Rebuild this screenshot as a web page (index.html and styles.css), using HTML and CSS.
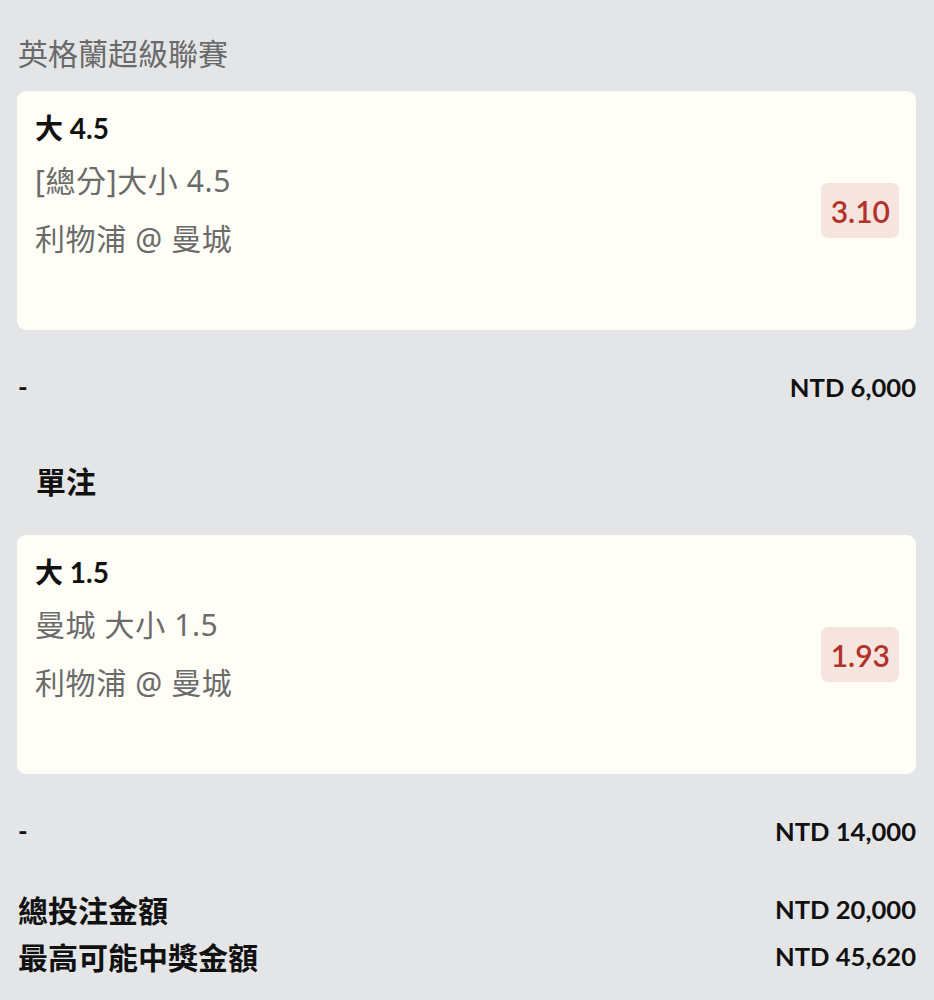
FILE: index.html
```html
<!DOCTYPE html>
<html lang="zh-Hant">
<head>
    <meta charset="UTF-8">
    <meta name="viewport" content="width=device-width, initial-scale=1.0">
    <title>投注單</title>
    <link rel="stylesheet" href="styles.css">
</head>
<body>

<h2 class="league">英格蘭超級聯賽</h2>

<div class="bet-card">
    <div class="bet-info">
        <div class="bet-title">大 4.5</div>
        <div class="bet-market">[總分]大小 4.5</div>
        <div class="bet-match">利物浦 @ 曼城</div>
    </div>
    <div class="odds">3.10</div>
</div>

<div class="stake-row">
    <span>-</span>
    <span class="amount">NTD 6,000</span>
</div>

<h3 class="section-title">單注</h3>

<div class="bet-card">
    <div class="bet-info">
        <div class="bet-title">大 1.5</div>
        <div class="bet-market">曼城 大小 1.5</div>
        <div class="bet-match">利物浦 @ 曼城</div>
    </div>
    <div class="odds">1.93</div>
</div>

<div class="stake-row last">
    <span>-</span>
    <span class="amount">NTD 14,000</span>
</div>

<div class="summary">
    <div class="summary-row">
        <span class="label">總投注金額</span>
        <span class="amount">NTD 20,000</span>
    </div>
    <div class="summary-row">
        <span class="label">最高可能中獎金額</span>
        <span class="amount">NTD 45,620</span>
    </div>
</div>

</body>
</html>
```

FILE: styles.css
```css
body {
    margin: 0;
    padding: 32px 18px 20px 17px;
    background-color: #e4e5e7;
    font-family: Lato, "Noto Sans CJK TC", sans-serif;
    color: #111;
}

.league {
    margin: 0 0 19px 1px;
    font-family: "Noto Sans CJK TC", sans-serif;
    font-size: 30px;
    font-weight: 400;
    line-height: 40px;
    color: #6a6a6a;
}

.bet-card {
    display: flex;
    align-items: center;
    padding: 17px 17px 0 18px;
    background-color: #fefef6;
    border-radius: 9px;
}
.bet-info {
    flex: 1;
    padding-bottom: 71px;
}
.bet-title {
    font-size: 28px;
    font-weight: 700;
    line-height: 40px;
}
.bet-market,
.bet-match {
    font-family: "Noto Sans", "Noto Sans CJK TC", sans-serif;
    font-size: 30px;
    line-height: 40px;
    letter-spacing: 0.6px;
    color: #6b6b6b;
}
.bet-market {
    margin-top: 13px;
}
.bet-match {
    margin-top: 18px;
}
.odds {
    margin-bottom: 18px;
    padding: 8px 9px 7px 10px;
    background-color: #f6e5df;
    border-radius: 7px;
    font-size: 30px;
    font-weight: 600;
    line-height: 40px;
    color: #b2322a;
}

.stake-row,
.summary-row {
    display: flex;
    justify-content: space-between;
    align-items: center;
    line-height: 40px;
    font-weight: 700;
}
.stake-row {
    margin: 37px 0 54px 1px;
    font-size: 26px;
}
.stake-row.last {
    margin-bottom: 38px;
}
.amount {
    font-size: 25.6px;
    font-weight: 700;
}

.section-title {
    margin: 0 0 34px 19px;
    font-size: 30px;
    line-height: 40px;
    font-weight: 700;
}

.summary {
    display: flex;
    flex-direction: column;
    gap: 7px;
    margin-left: 1px;
}
.summary-row .label {
    font-family: "Noto Sans CJK TC", sans-serif;
    font-size: 30px;
}
```
